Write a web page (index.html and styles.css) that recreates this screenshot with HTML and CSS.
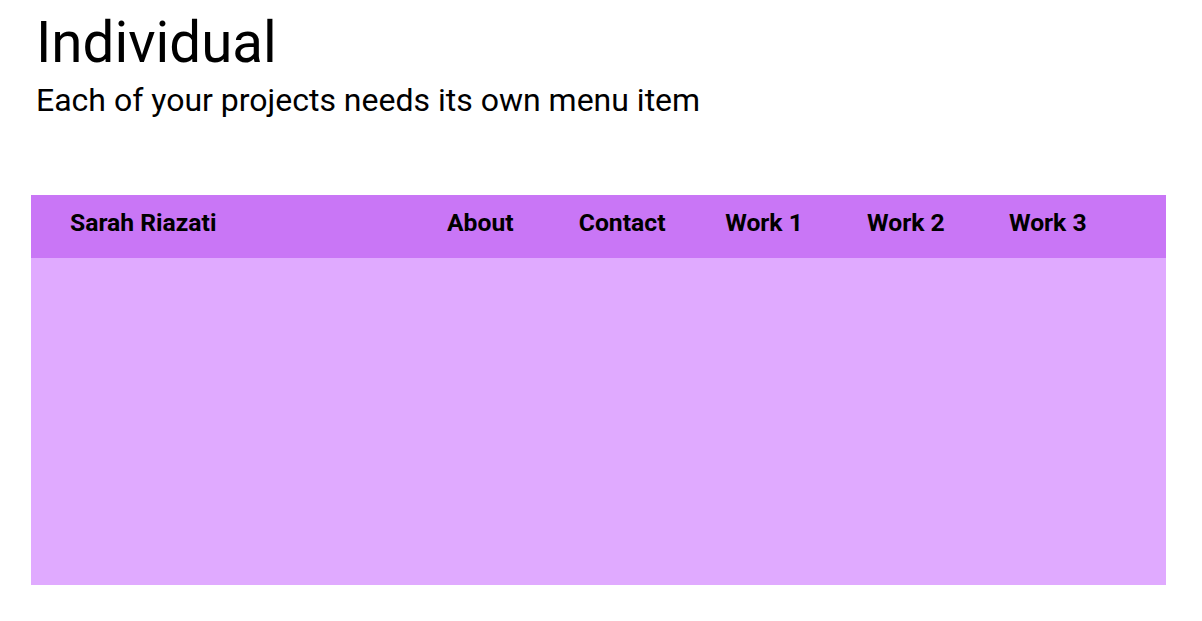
FILE: index.html
```html
<!DOCTYPE html>
<html>
<head>
<meta charset="utf-8">
<link rel="stylesheet" href="styles.css">
</head>
<body>
<header class="intro">
  <h1 class="title">Individual</h1>
  <p class="subtitle">Each of your projects needs its own menu item</p>
</header>
<section class="frame">
  <nav class="nav">
    <div class="brand">Sarah Riazati</div>
    <a class="link">About</a>
    <a class="link">Contact</a>
    <a class="link">Work 1</a>
    <a class="link">Work 2</a>
    <a class="link">Work 3</a>
  </nav>
  <div class="content"></div>
</section>
</body>
</html>
```
FILE: styles.css
```css
html, body {
  margin: 0;
  padding: 0;
  background: #ffffff;
}
body {
  font-family: Roboto, "Liberation Sans", sans-serif;
  color: #000;
  padding: 0 36px 0 31px;
}
.intro {
  padding: 11px 0 0 5px;
  height: 195px;
  box-sizing: border-box;
}
.title {
  margin: 0;
  font-weight: 400;
  font-size: 56.5px;
  line-height: 64px;
}
.subtitle {
  margin: 7px 0 0;
  font-size: 32px;
  line-height: 36px;
}
.frame {
  width: 1135px;
  background: #e0aaff;
  height: 390px;
}
.nav {
  display: grid;
  grid-template-columns: 33.3333% repeat(5, 12.5%);
  align-items: center;
  height: 63px;
  box-sizing: border-box;
  padding-bottom: 8px;
  background: #c976f6;
  font-weight: 700;
  font-size: 24.7px;
}
.brand {
  padding-left: 39px;
}
.link {
  text-align: center;
}
```
